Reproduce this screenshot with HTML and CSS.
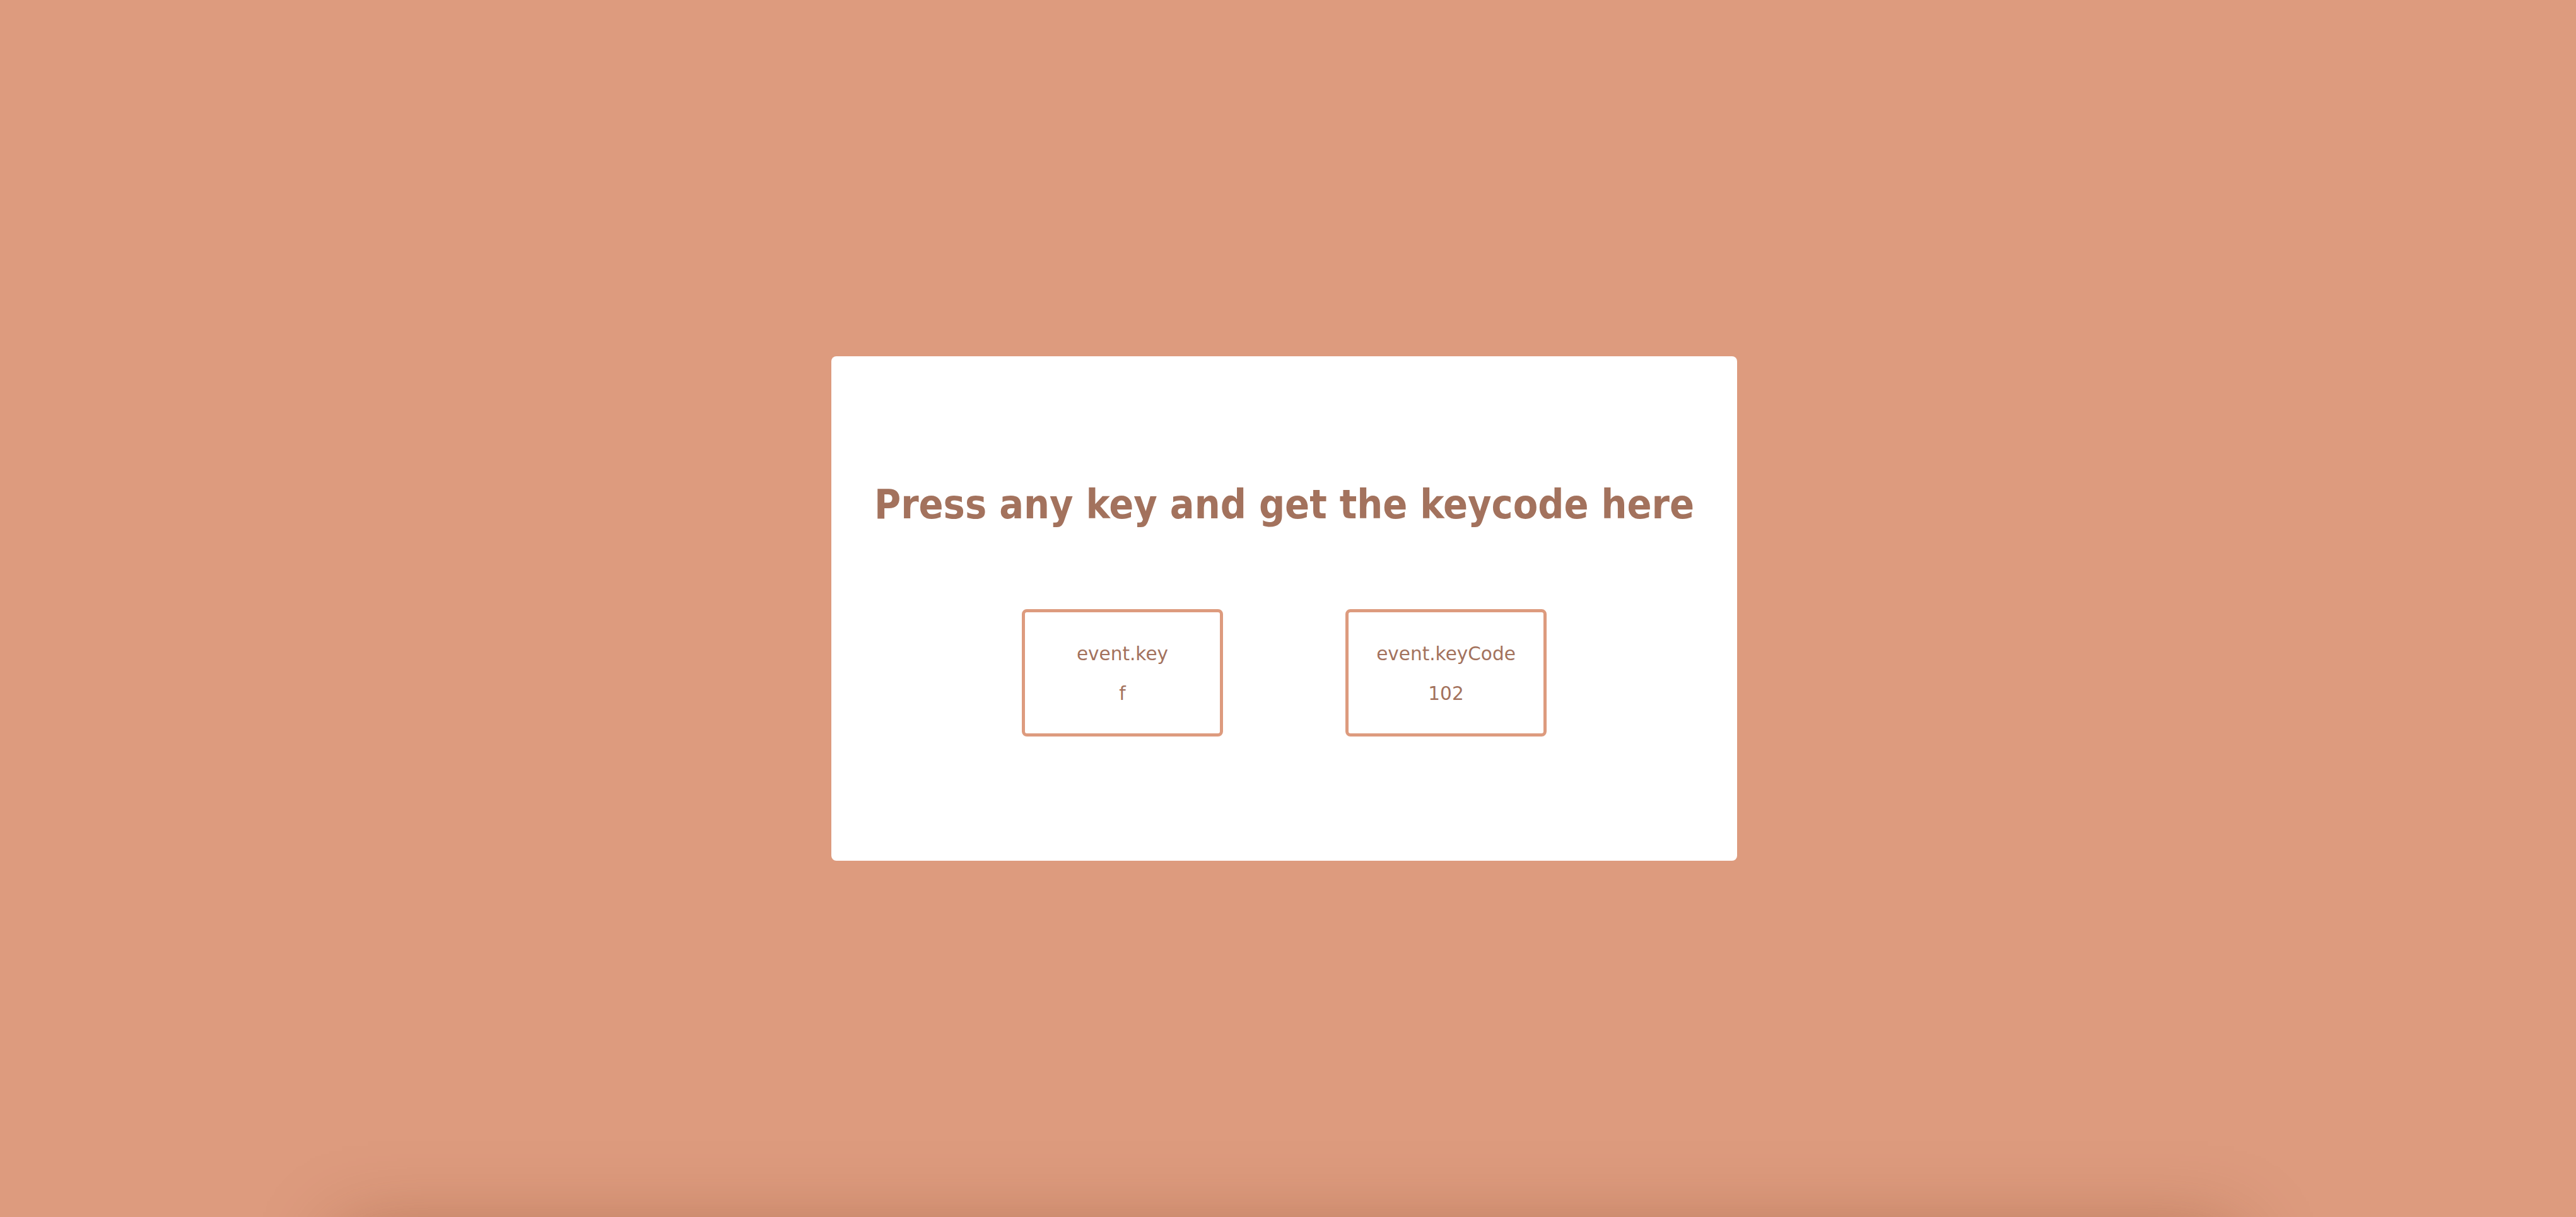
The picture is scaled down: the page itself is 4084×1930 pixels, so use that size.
FILE: index.html
```html
<!DOCTYPE html>
<html lang="en">
<head>
<meta charset="utf-8">
<title>Keycode</title>
<link rel="stylesheet" href="styles.css">
</head>
<body>
<main class="stage">
  <section class="card">
    <h1 class="title">Press any key and get the keycode here</h1>
    <div class="keys">
      <div class="key-box">
        <p class="key-label">event.key</p>
        <p class="key-value">f</p>
      </div>
      <div class="key-box">
        <p class="key-label">event.keyCode</p>
        <p class="key-value">102</p>
      </div>
    </div>
  </section>
</main>
<footer class="below"></footer>
</body>
</html>
```
FILE: styles.css
```css
html, body {
  margin: 0;
  padding: 0;
  overflow: hidden;
}

body {
  background: #dd9b7e;
  font-family: "DejaVu Sans", "Liberation Sans", sans-serif;
  color: #a3725d;
}

.stage {
  height: 1930px;
  box-sizing: border-box;
  padding-right: 12px;
  display: flex;
  align-items: center;
  justify-content: center;
}

.card {
  width: 1436px;
  height: 800px;
  box-sizing: border-box;
  background: #ffffff;
  border-radius: 8px;
  padding-top: 197px;
  display: flex;
  flex-direction: column;
  align-items: center;
}

.title {
  margin: 0;
  font-family: "DejaVu Sans Condensed", "DejaVu Sans", sans-serif;
  font-weight: 700;
  font-size: 64px;
  line-height: 1.2;
  color: #a3725d;
  white-space: nowrap;
}

.keys {
  margin-top: 127px;
  display: flex;
  gap: 194px;
}

.key-box {
  width: 319px;
  box-sizing: border-box;
  border: 5px solid #dd9b7e;
  border-radius: 8px;
  padding: 49px 0 44px;
  display: flex;
  flex-direction: column;
  align-items: center;
  gap: 28px;
}

.key-label,
.key-value {
  margin: 0;
  font-size: 29.5px;
  line-height: 1.2;
  color: #a3725d;
}

.below {
  width: 2600px;
  height: 0;
  margin: 0 auto;
  box-shadow: 0 225px 120px 200px rgba(120, 55, 25, 0.4);
}
```
